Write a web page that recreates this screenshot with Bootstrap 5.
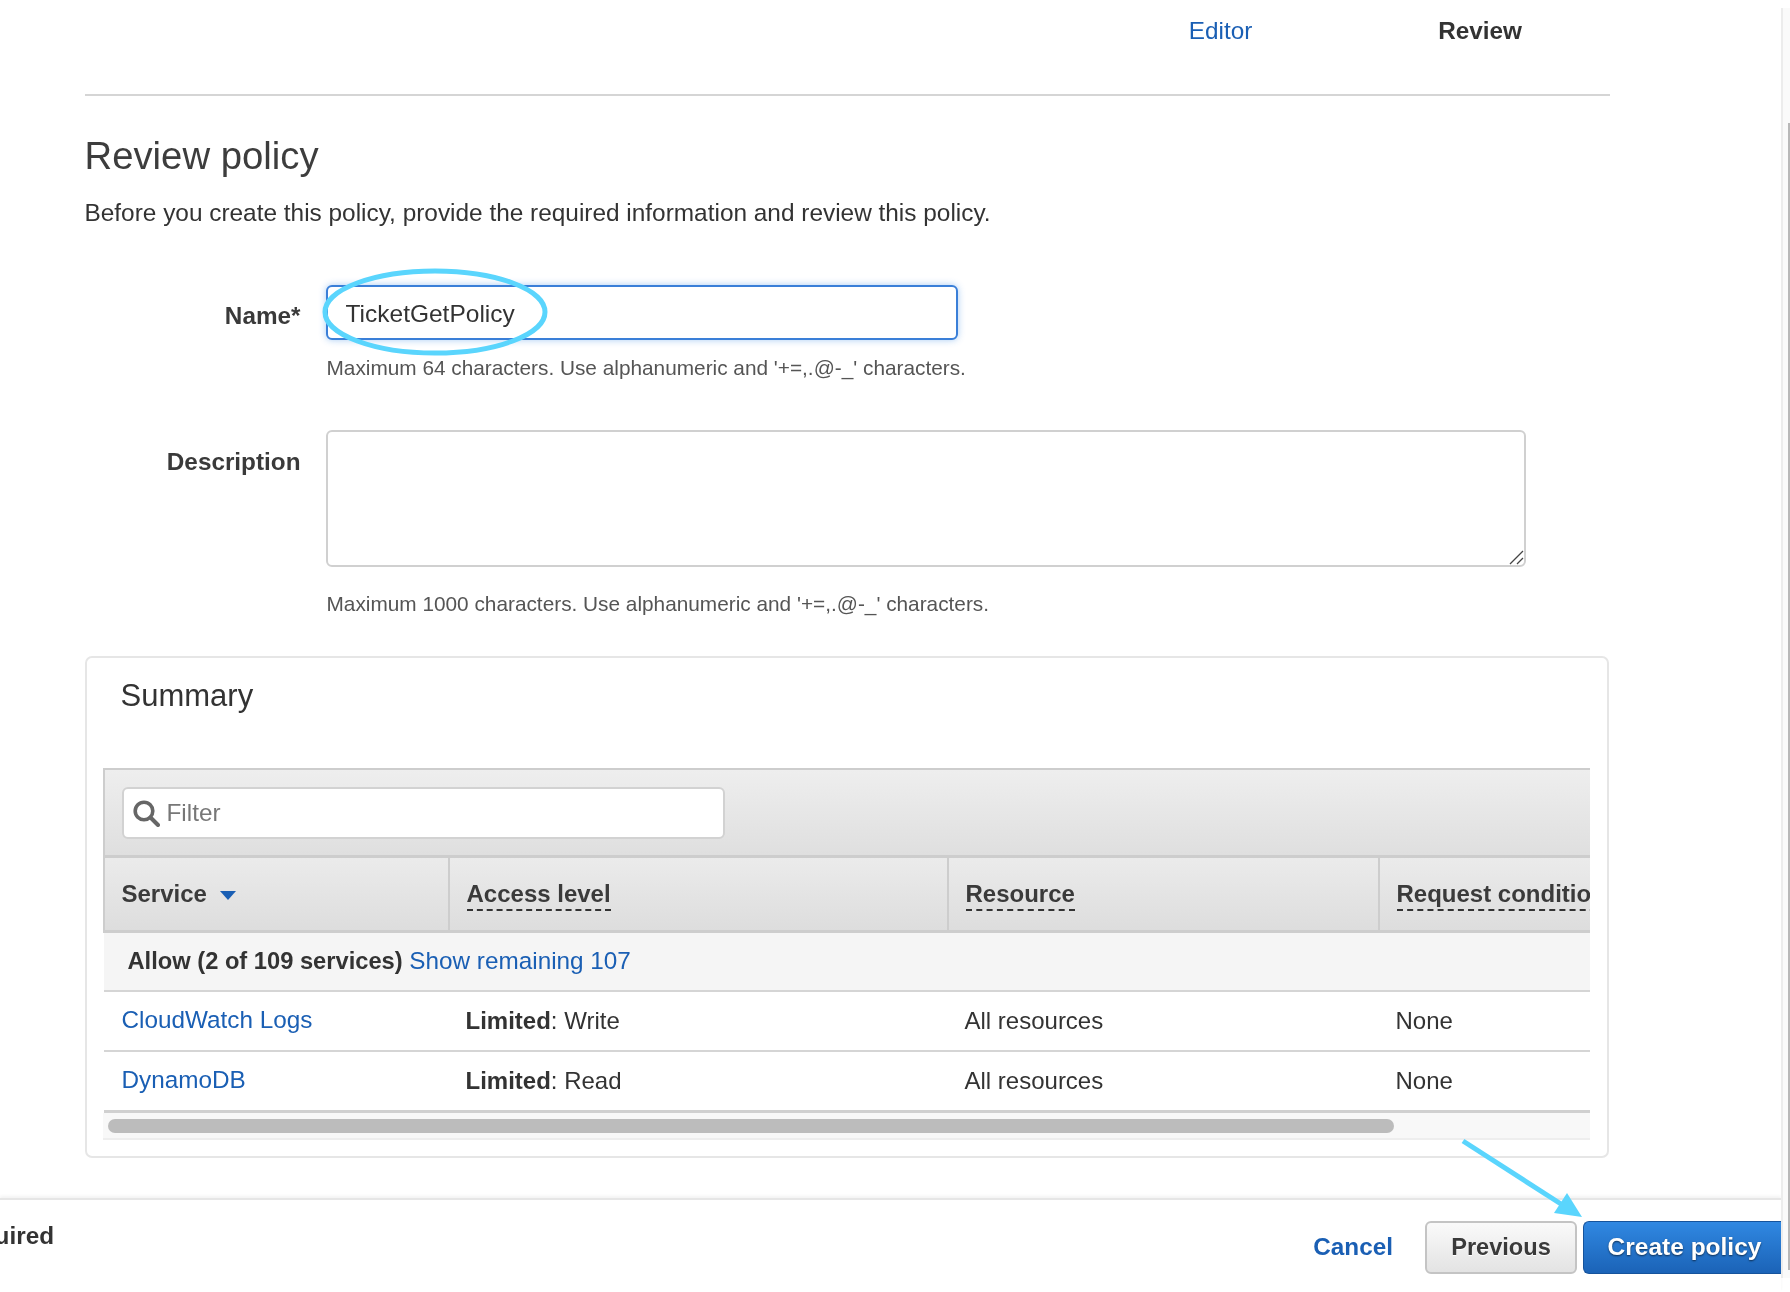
<!DOCTYPE html>
<html lang="en">
<head>
<meta charset="utf-8">
<title>Review policy</title>
<link href="https://cdn.jsdelivr.net/npm/bootstrap@5.3.0/dist/css/bootstrap.min.css" rel="stylesheet">
<style>
html,body{height:100%;overflow:hidden}
body{font-family:"Liberation Sans",Arial,sans-serif;font-size:24.3px;color:#333;background:#fff}
a{color:#1a5fb4;text-decoration:none}
.stage{position:relative;height:1292px;overflow:hidden;display:flex;flex-direction:column;filter:blur(.45px)}
.page-body{flex:1 1 auto;padding:0 180px 0 84.5px;min-height:0}
.step-tabs{height:96px;border-bottom:2px solid #d5d5d5;display:flex;justify-content:flex-end;padding:17px 88px 0 0;gap:186px;line-height:28px}
.step-tabs b{color:#333}
.page-title{font-size:38.3px;font-weight:400;color:#3d3d3d;margin:0;padding-top:38px;line-height:44px}
.page-lead{margin:20px 0 0;line-height:30px;color:#333;font-size:24.4px}
.form-line{display:flex;gap:25px}
.form-line label{width:216px;text-align:right;font-weight:700;color:#3a3a3a;flex:none}
.name-line{margin-top:57px}
.name-line label{padding-top:16px;line-height:30px}
.name-box{width:632px;height:55px;border:2px solid #3a7fd8;border-radius:6px;box-shadow:0 0 7px rgba(60,140,230,.45);font-size:24.5px;padding:2px 18px 0;color:#333;display:block;outline:0}
.hint{font-size:20.8px;line-height:26px;color:#555;margin:15px 0 0 1px}
.desc-line{margin-top:49px}
.desc-line label{padding-top:17px;line-height:30px}
.desc-slot{position:relative;width:1200px}
.desc-box{width:1200px;height:137px;border:2px solid #d0d0d0;border-radius:6px;display:block;outline:0;resize:none}
.grip-mark{position:absolute;right:2px;bottom:2px}
.hint-two{margin-top:24px}
.summary-panel{width:1524px;height:502px;margin-top:39px;border:2px solid #e6e6e6;border-radius:7px;padding:0 16px 0 16px}
.summary-title{font-size:31px;font-weight:400;color:#333;margin:0;padding:18px 0 0 18px;line-height:40px;height:110px}
.policy-wrap{overflow:hidden;width:1487px}
.filter-band{height:90px;border:2px solid #cdcdcd;border-bottom-width:3px;border-right:0;background:linear-gradient(#eeeeee,#dfdfdf);padding:17px 17px 15px}
.filter-box{width:603px;height:52px;border:2px solid #d2d2d2;border-radius:6px;background:#fff;display:flex;align-items:center;gap:7px;padding-left:9px;color:#777}
.policy-table{table-layout:fixed;width:1700px;border-collapse:collapse;margin:0;font-size:24px}
.policy-table a{font-size:24.3px}
.policy-table th{height:73px;background:linear-gradient(#ebebeb,#dddddd);border-right:2px solid #cdcdcd;border-bottom:3px solid #cdcdcd;padding:0 16px 0 17px;font-size:24px;font-weight:700;color:#3a3a3a;white-space:nowrap;vertical-align:middle}
.policy-table th:first-child{border-left:2px solid #cdcdcd}
.dash-head{border-bottom:2px dashed #333;padding-bottom:2px;display:inline-block;line-height:27px;margin-top:2px}
.sort-caret{display:inline-block;width:0;height:0;border:8px solid transparent;border-top:9px solid #1a5fb4;border-bottom:0;margin-left:13px;vertical-align:2px}
.allow-row td{background:#f5f5f5;height:60px;border-bottom:2px solid #d5d5d5;padding:0 0 0 24px;vertical-align:middle;white-space:nowrap}
.allow-row b{font-size:23.7px}
.data-row td{height:60px;border-bottom:2px solid #d5d5d5;padding:0 16px 0 17px;vertical-align:middle;color:#333;white-space:nowrap}
.data-row td:first-child{padding-left:18px;padding-bottom:2px}
.data-row:last-child td{border-bottom:3px solid #d0d0d0}
.h-track{height:27px;background:#f8f8f8;border-bottom:2px solid #eeeeee;padding:6px 0 0 5px}
.h-thumb{height:14px;border-radius:7px;background:#bcbcbc}
.foot-bar{height:94px;flex:none;border-top:2px solid #e6e6e6;box-shadow:0 -2px 3px rgba(0,0,0,.05);display:flex;align-items:flex-start;margin-right:9px;position:relative}
.req-note{font-weight:700;color:#333;width:54px;overflow:hidden;display:flex;justify-content:flex-end;white-space:nowrap;margin-top:21px;line-height:30px}
.req-note span{flex:none}
.foot-actions{margin-left:auto;display:flex;align-items:center;margin-top:21px}
.foot-cancel{font-weight:700;margin-right:32px}
.foot-btn{height:53px;font-size:24.5px;font-weight:700;border-radius:6px;padding:0;line-height:1}
.btn-prev{width:152px;font-size:23.6px;background:linear-gradient(#fafafa,#e3e3e3);border:2px solid #c4c4c4;color:#3a3a3a;text-shadow:0 1px 0 #fff}
.btn-create{width:198px;margin-left:6px;padding-left:4px;background:linear-gradient(#3088e2,#1b63b7);border:1px solid #15539c;border-right:0;color:#fff;border-radius:6px 0 0 6px;text-shadow:0 1px 2px rgba(0,0,0,.6)}
.v-scroll{position:absolute;top:8px;bottom:14px;right:0;width:9px;background:#fafafa;border-left:2px solid #ececec}
.v-scroll i{position:absolute;width:2px;right:0;top:115px;bottom:8px;background:#b8b8b8}
.mark-layer{position:absolute;left:0;top:0;pointer-events:none}
</style>
</head>
<body>
<div class="stage">
  <div class="page-body">
    <nav class="step-tabs"><a href="#">Editor</a><b>Review</b></nav>
    <h1 class="page-title">Review policy</h1>
    <p class="page-lead">Before you create this policy, provide the required information and review this policy.</p>
    <div class="form-line name-line">
      <label for="nm">Name*</label>
      <div><input id="nm" class="name-box" value="TicketGetPolicy">
      <div class="hint">Maximum 64 characters. Use alphanumeric and '+=,.@-_' characters.</div></div>
    </div>
    <div class="form-line desc-line">
      <label for="ds">Description</label>
      <div><div class="desc-slot"><textarea id="ds" class="desc-box"></textarea>
        <svg class="grip-mark" width="15" height="15" viewBox="0 0 15 15" fill="none" stroke="#444" stroke-width="1.3"><path d="M1 14L14 1M8 14l6-6"/></svg></div>
      <div class="hint hint-two">Maximum 1000 characters. Use alphanumeric and '+=,.@-_' characters.</div></div>
    </div>
    <section class="summary-panel">
      <h2 class="summary-title">Summary</h2>
      <div class="policy-wrap">
        <div class="filter-band">
          <div class="filter-box">
            <svg width="27" height="27" viewBox="0 0 27 27" fill="none" stroke="#666"><circle cx="11" cy="11" r="8.8" stroke-width="3.6"/><path d="M17.5 17.5L25 25" stroke-width="4" stroke-linecap="round"/></svg>
            <span>Filter</span>
          </div>
        </div>
        <table class="policy-table">
          <colgroup><col style="width:345px"><col style="width:499px"><col style="width:431px"><col style="width:425px"></colgroup>
          <thead><tr>
            <th>Service<span class="sort-caret"></span></th>
            <th><span class="dash-head">Access level</span></th>
            <th><span class="dash-head">Resource</span></th>
            <th><span class="dash-head">Request condition</span></th>
          </tr></thead>
          <tbody>
            <tr class="allow-row"><td colspan="4"><b>Allow (2 of 109 services)</b> <a href="#">Show remaining 107</a></td></tr>
            <tr class="data-row"><td><a href="#">CloudWatch Logs</a></td><td><b>Limited</b>: Write</td><td>All resources</td><td>None</td></tr>
            <tr class="data-row"><td><a href="#">DynamoDB</a></td><td><b>Limited</b>: Read</td><td>All resources</td><td>None</td></tr>
          </tbody>
        </table>
        <div class="h-track"><div class="h-thumb" style="width:1286px"></div></div>
      </div>
    </section>
  </div>
  <footer class="foot-bar">
    <div class="req-note"><span>* Required</span></div>
    <div class="foot-actions">
      <a class="foot-cancel" href="#">Cancel</a>
      <button class="btn foot-btn btn-prev" type="button">Previous</button>
      <button class="btn foot-btn btn-create" type="button">Create policy</button>
    </div>
  </footer>
  <div class="v-scroll"><i></i></div>
  <svg class="mark-layer" width="1790" height="1292" viewBox="0 0 1790 1292" fill="none">
    <ellipse cx="435" cy="312" rx="110" ry="41" stroke="#5ad5fd" stroke-width="5"/>
    <path d="M1463 1141L1561 1204" stroke="#5ad5fd" stroke-width="5"/>
    <path d="M1582 1217L1554 1213 1567 1193Z" fill="#5ad5fd"/>
  </svg>
</div>
<script src="https://cdn.jsdelivr.net/npm/bootstrap@5.3.0/dist/js/bootstrap.bundle.min.js"></script>
</body>
</html>
